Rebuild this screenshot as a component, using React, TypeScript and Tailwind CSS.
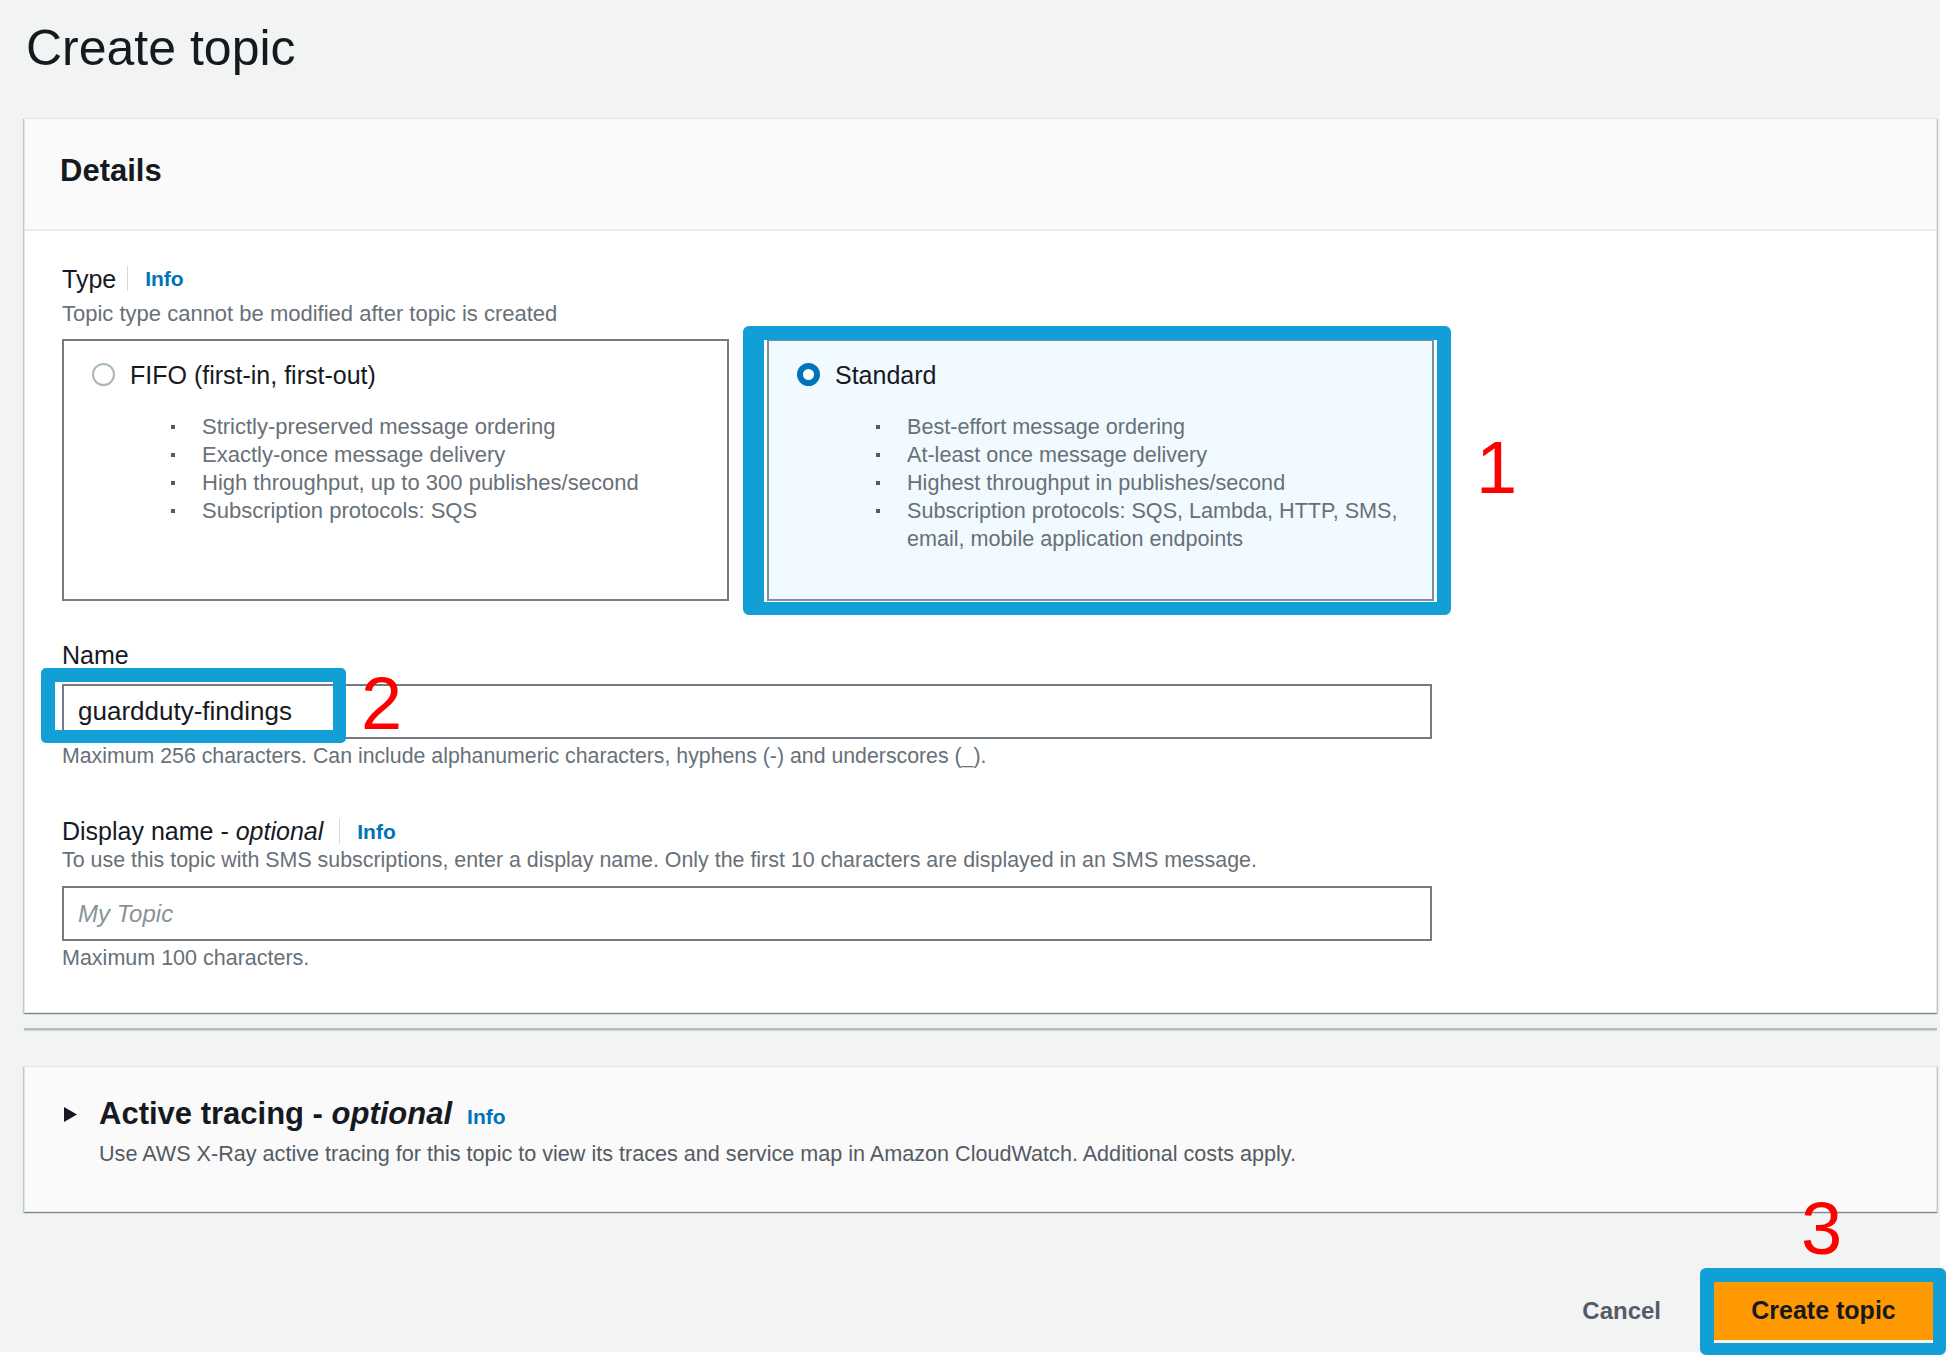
import React from "react";

const Bullet = ({ children }: { children: React.ReactNode }) => (
  <li className="flex items-start">
    <span className="mt-[12px] block h-[4px] w-[4px] shrink-0 bg-[#545b64]" />
    <span className="ml-[27px]">{children}</span>
  </li>
);

const InfoLink = ({ className = "" }: { className?: string }) => (
  <span className={"font-bold text-[21px] text-[#0073bb] " + className}>Info</span>
);

export default function App() {
  return (
    <div className="relative min-h-[1357px] w-[1947px] bg-white font-['Liberation_Sans',Arial,sans-serif] text-[#16191f]">
      <div className="h-[1352px] w-[1940px] bg-[#f2f3f3]">
        <h1 className="pl-[26px] pt-[20px] text-[50px] font-normal leading-[56px]">Create topic</h1>

        {/* Details panel */}
        <div className="ml-[24px] mr-[3px] mt-[42px] border border-[#e3e6e6] bg-white shadow-[0_1px_1px_0_rgba(0,28,36,0.3),1px_1px_1px_0_rgba(0,28,36,0.15),-1px_1px_1px_0_rgba(0,28,36,0.15)]">
          <div className="h-[112px] border-b-2 border-[#eaeded] bg-[#fafafa] pl-[35px] pt-[34px]">
            <h2 className="text-[31px] font-bold leading-[36px]">Details</h2>
          </div>
          <div className="pb-[41px] pl-[37px] pt-[32px]">
            <div className="w-[1372px]">
              <div className="flex items-center">
                <span className="text-[25px] leading-[30px]">Type</span>
                <span className="ml-[11px] h-[25px] w-px bg-[#d5dbdb]" />
                <InfoLink className="ml-[17px]" />
              </div>
              <div className="mt-[6px] text-[22px] leading-[26px] text-[#687078]">
                Topic type cannot be modified after topic is created
              </div>

              <div className="mt-[12px] grid grid-cols-2 gap-[38px]">
                <div className="h-[262px] border-2 border-[#737c85] bg-white pl-[28px] pt-[19px]">
                  <div className="flex h-[30px] items-center">
                    <span className="block h-[23px] w-[23px] rounded-full border-2 border-[#aab7b8] bg-white" />
                    <span className="ml-[15px] text-[25px] leading-[30px]">FIFO (first-in, first-out)</span>
                  </div>
                  <ul className="mt-[23px] pl-[79px] text-[22px] leading-[28px] text-[#687078]">
                    <Bullet>Strictly-preserved message ordering</Bullet>
                    <Bullet>Exactly-once message delivery</Bullet>
                    <Bullet>High throughput, up to 300 publishes/second</Bullet>
                    <Bullet>Subscription protocols: SQS</Bullet>
                  </ul>
                </div>
                <div className="h-[262px] border-2 border-[#7b8fa3] bg-[#f1faff] pl-[28px] pt-[19px]">
                  <div className="flex h-[30px] items-center">
                    <span className="block h-[23px] w-[23px] rounded-full border-[6px] border-[#0073bb] bg-white" />
                    <span className="ml-[15px] text-[25px] leading-[30px]">Standard</span>
                  </div>
                  <ul className="mt-[23px] pl-[79px] text-[21.6px] leading-[28px] text-[#687078]">
                    <Bullet>Best-effort message ordering</Bullet>
                    <Bullet>At-least once message delivery</Bullet>
                    <Bullet>Highest throughput in publishes/second</Bullet>
                    <Bullet>
                      Subscription protocols: SQS, Lambda, HTTP, SMS,
                      <br />
                      email, mobile application endpoints
                    </Bullet>
                  </ul>
                </div>
              </div>

              <div className="mt-[39px] text-[25px] leading-[30px]">Name</div>
              <div className="mt-[14px] flex h-[55px] w-[1370px] items-center border-2 border-[#737c85] bg-white pl-[14px] text-[26px]">
                guardduty-findings
              </div>
              <div className="mt-[4px] text-[21.3px] leading-[26px] text-[#687078]">
                Maximum 256 characters. Can include alphanumeric characters, hyphens (-) and underscores (_).
              </div>

              <div className="mt-[47px] flex items-center">
                <span className="text-[25px] leading-[30px]">
                  Display name - <i>optional</i>
                </span>
                <span className="ml-[16px] h-[25px] w-px bg-[#d5dbdb]" />
                <InfoLink className="ml-[17px]" />
              </div>
              <div className="text-[21.4px] leading-[26px] text-[#687078]">
                To use this topic with SMS subscriptions, enter a display name. Only the first 10 characters are displayed in an SMS message.
              </div>
              <div className="mt-[13px] flex h-[55px] w-[1370px] items-center border-2 border-[#737c85] bg-white pl-[14px] text-[24px] italic text-[#879596]">
                My Topic
              </div>
              <div className="mt-[4px] text-[21.5px] leading-[26px] text-[#687078]">Maximum 100 characters.</div>
            </div>
          </div>
        </div>

        {/* divider */}
        <div className="ml-[24px] mr-[3px] mt-[15px] h-[2px] bg-[#b3bcbf] shadow-[0_1px_1px_0_rgba(0,28,36,0.15)]" />

        {/* Active tracing panel */}
        <div className="ml-[24px] mr-[3px] mt-[36px] h-[146px] border border-[#e3e6e6] bg-[#fafafa] pl-[39px] pt-[29px] shadow-[0_1px_1px_0_rgba(0,28,36,0.3),1px_1px_1px_0_rgba(0,28,36,0.15),-1px_1px_1px_0_rgba(0,28,36,0.15)]">
          <div className="flex items-center">
            <svg width="13" height="15" viewBox="0 0 13 15" className="shrink-0">
              <polygon points="0,0 13,7.5 0,15" fill="#16191f" />
            </svg>
            <div className="ml-[22px] flex items-baseline">
              <span className="text-[31px] font-bold leading-[36px]">
                Active tracing - <i>optional</i>
              </span>
              <InfoLink className="ml-[15px]" />
            </div>
          </div>
          <div className="ml-[35px] mt-[8px] text-[21.6px] leading-[26px] text-[#545b64]">
            Use AWS X-Ray active tracing for this topic to view its traces and service map in Amazon CloudWatch. Additional costs apply.
          </div>
        </div>

        {/* Actions */}
        <div className="mt-[70px] flex items-center justify-end gap-[53px] pr-[7px]">
          <span className="text-[24px] font-bold text-[#545b64]">Cancel</span>
          <button className="flex h-[58px] w-[219px] items-center justify-center bg-[#ff9900] text-[25px] font-bold text-[#16191f]">
            Create topic
          </button>
        </div>
      </div>

      {/* Annotations */}
      <div className="absolute left-[743px] top-[326px] h-[289px] w-[708px] rounded-[6px] border-[14px] border-l-[21px] border-b-[13px] border-[#119fd6]" />
      <div className="absolute left-[41px] top-[668px] h-[75px] w-[305px] rounded-[5px] border-[14px] border-r-[13px] border-b-[13px] border-[#119fd6]" />
      <div className="absolute left-[1700px] top-[1268px] h-[87px] w-[246px] rounded-[6px] border-[14px] border-r-[13px] border-b-[12px] border-[#119fd6]" />

      <span className="absolute left-[1476px] top-[431px] text-[74px] leading-[74px] text-[#ff0000]">1</span>
      <span className="absolute left-[361px] top-[667px] text-[74px] leading-[74px] text-[#ff0000]">2</span>
      <span className="absolute left-[1801px] top-[1192px] text-[74px] leading-[74px] text-[#ff0000]">3</span>
    </div>
  );
}
